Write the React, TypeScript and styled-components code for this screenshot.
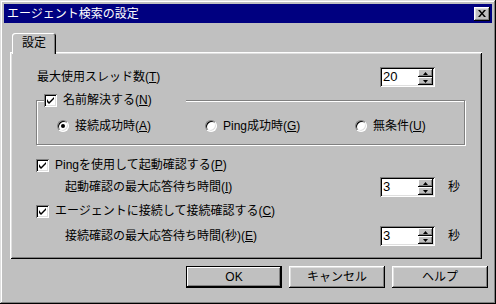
import React from "react";
import styled, { createGlobalStyle } from "styled-components";

const FONT = `"Liberation Sans", "Noto Sans CJK JP", sans-serif`;

const GlobalStyle = createGlobalStyle`
  html, body { margin: 0; padding: 0; background: #c0c0c0; }
  body { font-family: ${FONT}; font-size: 12px; }
  * { box-sizing: border-box; }
`;

const Window = styled.div`
  width: 496px;
  height: 304px;
  background: #c0c0c0;
  padding: 4px;
  box-shadow: inset -1px -1px #000, inset 1px 1px #dfdfdf, inset -2px -2px #808080,
    inset 2px 2px #fff;
  display: flex;
  flex-direction: column;
  font-family: ${FONT};
  font-size: 12px;
  color: #000;
`;

const TitleBar = styled.div`
  height: 19px;
  background: #000080;
  display: flex;
  align-items: center;
  justify-content: space-between;
  padding: 0 2px 0 3px;
`;

const TitleText = styled.span`
  color: #fff;
  font-size: 12px;
  line-height: 16px;
`;

const CloseButton = styled.div`
  width: 16px;
  height: 14px;
  background: #c0c0c0;
  box-shadow: inset -1px -1px #000, inset 1px 1px #fff, inset -2px -2px #808080,
    inset 2px 2px #dfdfdf;
  display: flex;
  align-items: center;
  justify-content: center;
`;

const Body = styled.div`
  flex: 1;
  display: flex;
  flex-direction: column;
  padding: 10px 4px 0 6px;
`;

const TabStrip = styled.div`
  display: flex;
  padding-left: 2px;
  position: relative;
  z-index: 1;
  margin-bottom: -2px;
`;

const Tab = styled.div`
  height: 21px;
  padding: 2px 10px 0 10px;
  background: #c0c0c0;
  border-radius: 3px 3px 0 0;
  box-shadow: inset 1px 1px #fff, inset -1px 0 #000, inset -2px 0 #808080;
  line-height: 16px;
  font-size: 12px;
`;

const Panel = styled.div`
  margin-right: 6px;
  background: #c0c0c0;
  box-shadow: inset 1px 1px #fff, inset -1px -1px #000, inset 2px 2px #dfdfdf,
    inset -2px -2px #808080;
  padding: 15px 10px 13px 26px;
  display: flex;
  flex-direction: column;
`;

const Row = styled.div<{ $mt?: number; $indent?: number }>`
  display: flex;
  align-items: center;
  height: 20px;
  margin-top: ${(p) => p.$mt ?? 0}px;
  padding-left: ${(p) => p.$indent ?? 0}px;
`;

const Label = styled.span`
  flex: 1;
  line-height: 16px;
  white-space: nowrap;
`;

const Unit = styled.span`
  width: 37px;
  padding-left: 13px;
  line-height: 16px;
`;

const SpinBox = styled.div`
  width: 55px;
  height: 20px;
  display: flex;
  background: #fff;
  padding: 2px;
  box-shadow: inset 1px 1px #808080, inset -1px -1px #fff, inset 2px 2px #000,
    inset -2px -2px #dfdfdf;
`;

const SpinValue = styled.span`
  flex: 1;
  font-family: "Liberation Sans", sans-serif;
  font-size: 13px;
  line-height: 16px;
  padding-left: 1px;
`;

const SpinButtons = styled.div`
  width: 15px;
  display: flex;
  flex-direction: column;
`;

const SpinButton = styled.div`
  flex: 1;
  background: #c0c0c0;
  box-shadow: inset -1px -1px #000, inset 1px 1px #fff, inset -2px -2px #808080;
  display: flex;
  align-items: center;
  justify-content: center;
`;

const CheckRow = styled.label<{ $mt?: number }>`
  display: flex;
  align-items: center;
  gap: 6px;
  height: 16px;
  margin-top: ${(p) => p.$mt ?? 0}px;
  line-height: 16px;
  white-space: nowrap;
`;

const Text = styled.span`
  white-space: nowrap;
  line-height: 16px;
`;

const CheckBox = styled.span`
  width: 13px;
  height: 13px;
  flex: none;
  background: #fff;
  box-shadow: inset 1px 1px #808080, inset -1px -1px #fff, inset 2px 2px #000,
    inset -2px -2px #dfdfdf;
  display: flex;
  align-items: center;
  justify-content: center;
`;

const Group = styled.fieldset`
  margin: 6px 7px 0 0;
  padding: 11px 0 10px 0;
  border: 1px solid #808080;
  box-shadow: 1px 1px 0 #fff, inset 1px 1px 0 #fff;
  min-width: 0;
`;

const Legend = styled.legend`
  margin-left: 7px;
  padding: 0;
  width: 142px;
  height: 14px;
  background: #c0c0c0;
  position: relative;
  display: flex;
  align-items: center;
`;

const RadioGrid = styled.div`
  display: grid;
  grid-template-columns: 148px 150px 1fr;
  height: 16px;
  padding-left: 20px;
`;

const RadioItem = styled.label`
  display: flex;
  align-items: center;
  gap: 6px;
  line-height: 16px;
  white-space: nowrap;
`;

const RadioCircle = styled.span<{ $checked?: boolean }>`
  width: 12px;
  height: 12px;
  flex: none;
  border-radius: 50%;
  border: 1px solid;
  border-color: #808080 #fff #fff #808080;
  background: #fff;
  box-shadow: inset 1px 1px #000, inset -1px -1px #dfdfdf;
  display: flex;
  align-items: center;
  justify-content: center;
  &::after {
    content: "";
    width: 4px;
    height: 4px;
    border-radius: 50%;
    background: ${(p) => (p.$checked ? "#000" : "transparent")};
  }
`;

const ButtonRow = styled.div`
  display: flex;
  justify-content: flex-end;
  gap: 7px;
  margin-top: 7px;
`;

const Button = styled.div<{ $default?: boolean }>`
  width: 96px;
  height: 22px;
  display: flex;
  align-items: center;
  justify-content: center;
  background: #c0c0c0;
  line-height: 16px;
  box-shadow: ${(p) =>
    p.$default
      ? "inset 0 0 0 1px #000, inset -2px -2px #000, inset 2px 2px #fff, inset -3px -3px #808080"
      : "inset -1px -1px #000, inset 1px 1px #fff, inset -2px -2px #808080, inset 2px 2px #dfdfdf"};
`;

const Check = () => (
  <svg width="7" height="7" viewBox="0 0 7 7">
    <path d="M0 2 L0 5 L2 7 L7 2 L7 0 L2 5 Z" fill="#000" />
  </svg>
);

const Up = () => (
  <svg width="5" height="3" viewBox="0 0 5 3">
    <path d="M2.5 0 L5 3 L0 3 Z" fill="#000" />
  </svg>
);

const Down = () => (
  <svg width="5" height="3" viewBox="0 0 5 3">
    <path d="M0 0 L5 0 L2.5 3 Z" fill="#000" />
  </svg>
);

const Spin: React.FC<{ value: string }> = ({ value }) => (
  <SpinBox>
    <SpinValue>{value}</SpinValue>
    <SpinButtons>
      <SpinButton>
        <Up />
      </SpinButton>
      <SpinButton>
        <Down />
      </SpinButton>
    </SpinButtons>
  </SpinBox>
);

export default function App() {
  return (
    <>
      <GlobalStyle />
      <Window>
        <TitleBar>
          <TitleText>エージェント検索の設定</TitleText>
          <CloseButton>
            <svg width="8" height="7" viewBox="0 0 8 7">
              <path d="M0 0 L2 0 L4 2.5 L6 0 L8 0 L5 3.5 L8 7 L6 7 L4 4.5 L2 7 L0 7 L3 3.5 Z" fill="#000" />
            </svg>
          </CloseButton>
        </TitleBar>
        <Body>
          <TabStrip>
            <Tab>設定</Tab>
          </TabStrip>
          <Panel>
            <Row $indent={1}>
              <Label>
                最大使用スレッド数(<u>T</u>)
              </Label>
              <Spin value="20" />
              <Unit />
            </Row>
            <Group>
              <Legend>
                <CheckRow>
                  <CheckBox>
                    <Check />
                  </CheckBox>
                  <Text>
                    名前解決する(<u>N</u>)
                  </Text>
                </CheckRow>
              </Legend>
              <RadioGrid>
                <RadioItem>
                  <RadioCircle $checked />
                  <Text>
                    接続成功時(<u>A</u>)
                  </Text>
                </RadioItem>
                <RadioItem>
                  <RadioCircle />
                  <Text>
                    Ping成功時(<u>G</u>)
                  </Text>
                </RadioItem>
                <RadioItem>
                  <RadioCircle />
                  <Text>
                    無条件(<u>U</u>)
                  </Text>
                </RadioItem>
              </RadioGrid>
            </Group>
            <CheckRow $mt={12}>
              <CheckBox>
                <Check />
              </CheckBox>
              <Text>
                Pingを使用して起動確認する(<u>P</u>)
              </Text>
            </CheckRow>
            <Row $mt={4} $indent={29}>
              <Label>
                起動確認の最大応答待ち時間(<u>I</u>)
              </Label>
              <Spin value="3" />
              <Unit>秒</Unit>
            </Row>
            <CheckRow $mt={6}>
              <CheckBox>
                <Check />
              </CheckBox>
              <Text>
                エージェントに接続して接続確認する(<u>C</u>)
              </Text>
            </CheckRow>
            <Row $mt={7} $indent={29}>
              <Label>
                接続確認の最大応答待ち時間(秒)(<u>E</u>)
              </Label>
              <Spin value="3" />
              <Unit>秒</Unit>
            </Row>
          </Panel>
          <ButtonRow>
            <Button $default>OK</Button>
            <Button>キャンセル</Button>
            <Button>ヘルプ</Button>
          </ButtonRow>
        </Body>
      </Window>
    </>
  );
}
